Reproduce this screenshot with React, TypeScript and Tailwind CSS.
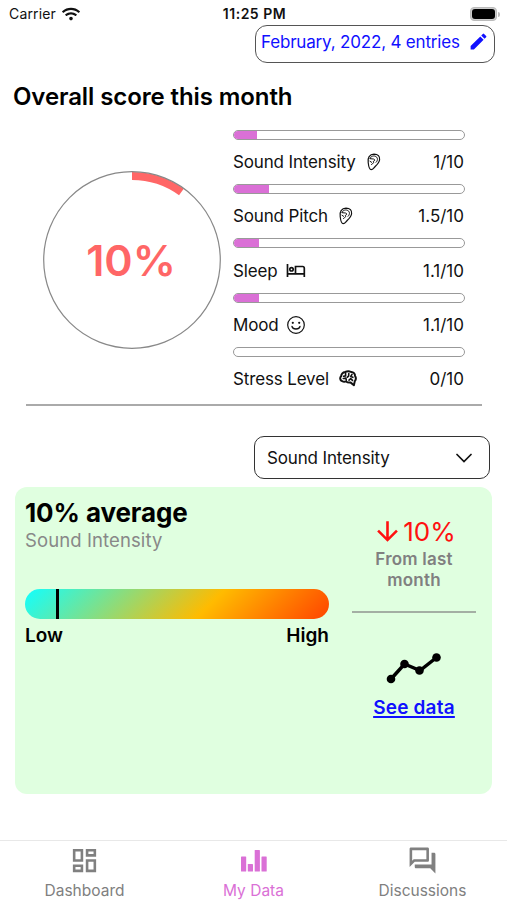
import { FaWifi } from "react-icons/fa";
import { MdArrowDownward, MdEdit, MdOutlineDashboard, MdOutlineForum } from "react-icons/md";

function EarIcon() {
  return (
    <svg viewBox="0 0 16 18" className="h-[18px] w-4" fill="none" stroke="currentColor" strokeLinecap="round">
      <path
        strokeWidth="1.2"
        d="M2.2 9.500C1.300 4.800 3.600 1.200 8 1.100c4 0 6 2.400 5.600 5.700-.3 2.800-2.100 4.500-4.200 6.400-1.700 1.500-2.200 3.500-4.200 3.500-2.300 0-2.600-3.400-3-7.200Z"
      />
      <path strokeWidth="1" d="M4 5.500C4.700 3 8 2.300 10 3.600c2.200 1.500 1.700 4.300.1 5.700M4.200 5.700l3.300.3c1.700.3 1.500 2-.2 2.400l.4 1.300c-.7.9-1.800.7-2.200 1.900M4 8.300l1.600 1" />
    </svg>
  );
}

function BedIcon() {
  return (
    <svg viewBox="0 0 20 15" className="-ml-0.5 h-[15px] w-5" fill="none" stroke="currentColor" strokeWidth="1.700">
      <path d="M1.500 1v13M18.300 14V5.200c0-1-.6-1.700-1.600-1.700H9.500v7.300M1.500 10.800h16.800" />
      <circle cx="5.500" cy="6.300" r="1.700" />
    </svg>
  );
}

function SmileIcon() {
  return (
    <svg viewBox="0 0 20 20" className="-ml-[3px] h-5 w-5" fill="none" stroke="currentColor" strokeLinecap="round">
      <circle cx="10" cy="10" r="8.300" strokeWidth="1.200" />
      <path d="M6 11.500c.8 3.300 7.200 3.300 8 0" strokeWidth="1.300" />
      <g fill="currentColor" stroke="none">
        <circle cx="6.800" cy="7.800" r="1.100" />
        <circle cx="13.200" cy="7.800" r="1.100" />
      </g>
    </svg>
  );
}

function BrainIcon() {
  return (
    <svg viewBox="0 0 18 17" className="h-[17px] w-[18px]" fill="none" stroke="currentColor" strokeLinecap="round" strokeLinejoin="round">
      <path
        strokeWidth="2"
        d="M3 11C.8 10.200.8 7.500 2.100 6.300 2.400 3.800 4.300 2.300 6.200 2c2-1 4.500-.8 5.900 0 2.300.2 3.900 1.800 4 3.900 1 1.800.8 4-.3 5.200l-.9 4.100-3.500-2.800c-1.500.2-3.100 0-4.300-1-1.600.5-3 .3-4.100-.4Z"
      />
      <path strokeWidth="1.600" d="M6.600 3.500v2.400l-2 .4M4.300 8.500l2.600-.4.4 2M9.800 3.500l-.2 2.700-1.200 1M13 4.400l-1.300 2 2.200.9M10 10.200l1.700-1.500 1.800 1.700" />
    </svg>
  );
}

function ChartIcon() {
  return (
    <svg viewBox="0 0 26 24" className="h-6 w-[26px]" fill="currentColor">
      <rect x="0" y="7.500" width="5.200" height="15" rx=".6" />
      <rect x="6.800" y="15" width="5.200" height="7.500" rx=".6" />
      <rect x="13.700" y="1" width="5.200" height="21.500" rx=".6" />
      <rect x="20.500" y="7.500" width="5.200" height="15" rx=".6" />
    </svg>
  );
}

const METRICS = [
  { label: "Sound Intensity", value: 1, icon: <EarIcon /> },
  { label: "Sound Pitch", value: 1.5, icon: <EarIcon /> },
  { label: "Sleep", value: 1.1, icon: <BedIcon /> },
  { label: "Mood", value: 1.1, icon: <SmileIcon /> },
  { label: "Stress Level", value: 0, icon: <BrainIcon /> },
];

const TABS = [
  { label: "Dashboard", icon: <MdOutlineDashboard className="h-[31px] w-[31px]" />, active: false },
  { label: "My Data", icon: <ChartIcon />, active: true },
  { label: "Discussions", icon: <MdOutlineForum className="h-[31px] w-[31px]" />, active: false },
];

function StatusBar() {
  return (
    <div className="grid h-[25px] grid-cols-3 items-center pt-[3px] pr-[7px] pl-[9px] text-sm leading-none">
      <div className="flex items-center gap-[6px] tracking-[0.15px]">
        <span>Carrier</span>
        <FaWifi className="h-[18px] w-[18px]" />
      </div>
      <span className="text-center font-semibold tracking-[0.5px]">11:25 PM</span>
      <div className="flex items-center justify-end gap-px">
        <div className="h-[14px] w-[27px] rounded-[4px] border border-[#bbb] bg-[#ccc] p-px">
          <div className="h-full rounded-[3px] bg-black" />
        </div>
        <div className="h-[5px] w-[2px] rounded-r bg-[#bbb]" />
      </div>
    </div>
  );
}

function ScoreCircle() {
  return (
    <div className="grid h-[178px] w-[178px] place-items-center">
      <svg viewBox="0 0 178 178" className="col-start-1 row-start-1 h-full w-full" fill="none">
        <path d="M89 5A84 84 0 0 1 138.400 21" stroke="#ff6666" strokeWidth="8" />
        <circle cx="89" cy="89" r="88.300" stroke="#888" strokeWidth="1.200" />
      </svg>
      <span className="col-start-1 row-start-1 -ml-0.5 text-[43px] font-semibold text-[#ff6666]">10%</span>
    </div>
  );
}

function MetricRow({ label, value, icon }: (typeof METRICS)[number]) {
  return (
    <div className="h-[54.2px]">
      <div className="h-[10px] overflow-hidden rounded-[5px] border-[1.500px] border-[#999]">
        <div className="h-full bg-[#da70d6]" style={{ width: `${value * 10}%` }} />
      </div>
      <div className="flex h-[44px] items-center pt-[2px] text-[17px] tracking-[-0.15px]">
        <span className="whitespace-nowrap">{label}</span>
        <span className="-mt-0.5 ml-[10px]">{icon}</span>
        <span className="mr-px ml-auto tracking-normal">{value}/10</span>
      </div>
    </div>
  );
}

function SummaryCard() {
  return (
    <section className="mt-2 ml-[15px] flex h-[307px] w-[477px] rounded-xl bg-[#e0ffe0]">
      <div className="ml-[10px] w-[304px]">
        <h2 className="mt-[9px] text-[26px] leading-[34px] font-bold tracking-[-0.1px] text-black">10% average</h2>
        <p className="-mt-px text-[18.500px] leading-[22px] tracking-[0.1px] text-[#888]">Sound Intensity</p>
        <div className="mt-[38px] h-[30px] overflow-hidden rounded-full bg-[linear-gradient(135deg,#1ff_0%,#fb0_60%,#f40_100%)]">
          <div className="ml-[31px] h-full w-[2.500px] bg-black" />
        </div>
        <div className="mt-[5px] flex justify-between text-[19px] leading-6 font-semibold text-black">
          <span>Low</span>
          <span>High</span>
        </div>
      </div>
      <div className="ml-[23px] flex w-[124px] flex-col items-center">
        <div className="mt-[27px] flex h-[34px] items-center text-[26px] text-[#ff1010]">
          <MdArrowDownward className="h-[31px] w-[31px]" />
          <span>10%</span>
        </div>
        <p className="mt-px w-[100px] text-center text-[17px] leading-[21px] font-semibold tracking-[0.2px] text-[#808080]">
          From last month
        </p>
        <div className="mt-[20px] h-[2px] w-full bg-[#a4afa4]" />
        <svg viewBox="0 0 56 32" className="mt-[39px] h-8 w-14" fill="none" stroke="black" strokeWidth="3.500">
          <path d="M5 27L18.500 12 34 18.500 50.500 5.500" />
          <g fill="black" stroke="none">
            <circle cx="5" cy="27" r="4.300" />
            <circle cx="18.500" cy="12" r="4.300" />
            <circle cx="33.500" cy="18.500" r="4.300" />
            <circle cx="50.500" cy="5.500" r="4.300" />
          </g>
        </svg>
        <a className="mt-[12px] text-[19px] leading-6 font-semibold tracking-[0.2px] whitespace-nowrap text-[#1010ff] underline decoration-2 underline-offset-2">
          See data
        </a>
      </div>
    </section>
  );
}

export default function App() {
  return (
    <div className="flex h-[900px] w-[507px] flex-col overflow-hidden bg-white font-['Inter',sans-serif] text-[#111]">
      <StatusBar />
      <button className="mr-[12px] flex h-[38px] w-[240px] items-center justify-between self-end rounded-xl border-[1.500px] border-[#555] px-[5px] pb-[3px] text-[17px] tracking-[-0.18px] whitespace-nowrap text-[#1010ff]">
        <span>February, 2022, 4 entries</span>
        <MdEdit className="-mt-0.5 h-[21px] w-[21px]" />
      </button>
      <h1 className="mt-[17px] ml-[13px] text-2xl leading-[34px] font-semibold tracking-[-0.1px] text-black">Overall score this month</h1>
      <div className="mt-4 flex h-[274px]">
        <div className="mt-[41px] ml-[43px]">
          <ScoreCircle />
        </div>
        <div className="ml-3 w-[232px]">
          {METRICS.map((metric) => (
            <MetricRow key={metric.label} {...metric} />
          ))}
        </div>
      </div>
      <div className="ml-[26px] h-[2px] w-[456px] bg-[#aaa]" />
      <button className="mt-[30px] mr-[17px] flex h-[43px] w-[236px] shrink-0 items-center justify-between self-end rounded-[10px] border-[1.500px] border-[#333] pr-[17px] pl-3 text-[17px] tracking-[-0.15px]">
        <span className="pt-[2px]">Sound Intensity</span>
        <svg viewBox="0 0 16 10" className="h-[10px] w-4" fill="none" stroke="currentColor" strokeWidth="1.700" strokeLinecap="round">
          <path d="M1 1.500L8 8.500 15 1.500" />
        </svg>
      </button>
      <SummaryCard />
      <nav className="mt-auto grid h-[60px] grid-cols-3 border-t border-[#e8e8e8]">
        {TABS.map((tab) => (
          <div key={tab.label} className={`flex flex-col items-center ${tab.active ? "text-[#da70d6]" : "text-[#808080]"}`}>
            <div className="flex h-[39px] items-center">{tab.icon}</div>
            <span className="mt-px text-[15.500px] leading-5">{tab.label}</span>
          </div>
        ))}
      </nav>
    </div>
  );
}
